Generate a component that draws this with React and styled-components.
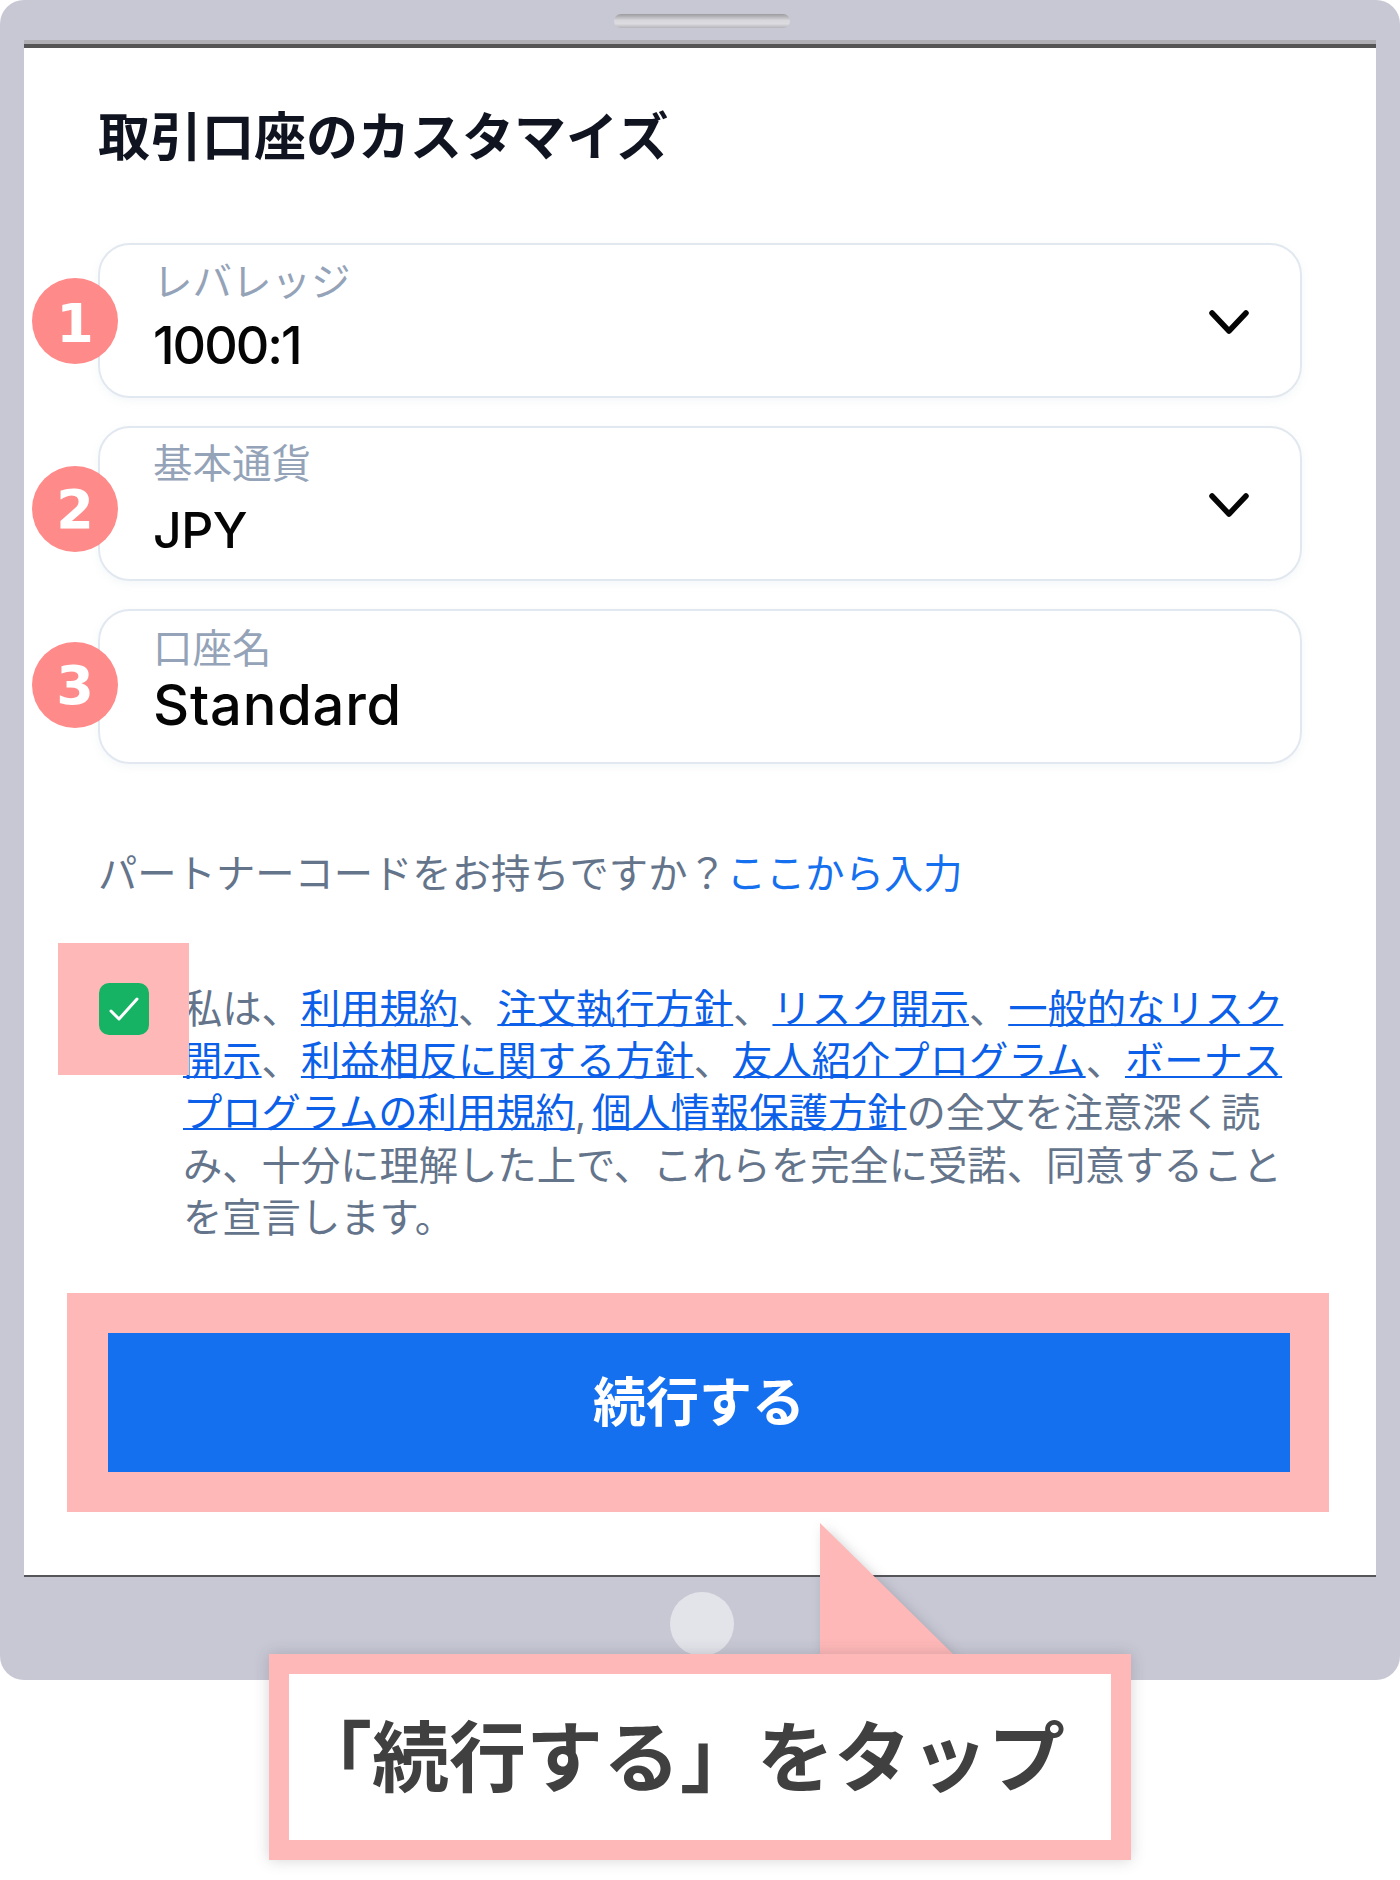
import styled, { createGlobalStyle } from "styled-components";

const GlobalStyle = createGlobalStyle`
  html, body {
    margin: 0;
    padding: 0;
    background: #fff;
  }
  * {
    box-sizing: border-box;
  }
`;

const FONT = `Inter, "Noto Sans CJK JP", sans-serif`;

const Page = styled.div`
  position: relative;
  width: 1400px;
  height: 1880px;
  font-family: ${FONT};
  overflow: hidden;
`;

const Device = styled.div`
  position: relative;
  width: 1400px;
  height: 1680px;
  padding: 40px 24px 0;
  background: #c7c8d4;
  border-radius: 24px;
`;

const Speaker = styled.div`
  position: absolute;
  left: 614px;
  top: 14px;
  width: 176px;
  height: 14px;
  border-radius: 7px;
  background: linear-gradient(to bottom, #9c9ca0, #d8d8dc 45%, #dcdce0 70%, #b4b4ba);
`;

const HomeButton = styled.div`
  position: absolute;
  left: 670px;
  top: 1592px;
  width: 64px;
  height: 64px;
  border-radius: 50%;
  background: #e3e4ea;
`;

const Screen = styled.div`
  background: #fff;
  border-top: 4px solid #b0b0b4;
  border-bottom: 2px solid #55555a;
  padding: 0 74px 63px;
`;

const ScreenEdge = styled.div`
  height: 4px;
  margin: 0 -74px 60px;
  background: #555;
`;

const Title = styled.h1`
  margin: 0 0 75px;
  font-size: 52px;
  line-height: 60px;
  font-weight: 700;
  color: #101420;
`;

const Fields = styled.div`
  display: flex;
  flex-direction: column;
  gap: 28px;
`;

const Field = styled.div`
  position: relative;
  height: 155px;
  display: flex;
  align-items: center;
  justify-content: space-between;
  padding: 2px 51px 0 53px;
  border: 2px solid #e2e8f0;
  border-radius: 32px;
  box-shadow: 0 3px 8px rgba(148, 163, 184, 0.1);
`;

const FieldText = styled.div`
  display: flex;
  flex-direction: column;
  gap: ${(p) => p.$gap}px;
  padding-bottom: ${(p) => p.$lift}px;
`;

const FieldLabel = styled.div`
  font-size: 39.5px;
  line-height: 46px;
  color: #94a3b8;
`;

const FieldValue = styled.div`
  font-size: ${(p) => p.$size}px;
  letter-spacing: ${(p) => p.$spacing}px;
  line-height: 60px;
  font-weight: 500;
  color: #050505;
`;

const StepBadge = styled.div`
  position: absolute;
  left: -68px;
  top: ${(p) => p.$top}px;
  width: 86px;
  height: 86px;
  padding-top: ${(p) => p.$nudge || 0}px;
  display: flex;
  align-items: center;
  justify-content: center;
  border-radius: 50%;
  background: #ff8a8a;
  color: #fff;
  font-family: "DejaVu Sans", sans-serif;
  font-size: 54px;
  font-weight: 700;
`;

const Partner = styled.p`
  margin: 84px 0 83px;
  font-size: 39.3px;
  line-height: 52px;
  color: #64748b;
  white-space: nowrap;
`;

const PartnerLink = styled.span`
  color: #1570ef;
`;

const Agreement = styled.div`
  display: flex;
  align-items: flex-start;
`;

const CheckMark = styled.div`
  position: relative;
  z-index: 1;
  flex: none;
  width: 50px;
  height: 52px;
  margin: 0 34px 0 1px;
  background: #fff;

  &::before {
    content: "";
    position: absolute;
    z-index: -1;
    inset: -40px -40px -40px -41px;
    background: #ffb8b8;
  }
`;

const CheckInner = styled.div`
  width: 100%;
  height: 100%;
  display: flex;
  align-items: center;
  justify-content: center;
  background: #16b364;
  border-radius: 10px;
`;

const AgreeText = styled.p`
  margin: 0;
  width: 1104px;
  font-size: 39.3px;
  line-height: 52.2px;
  word-spacing: -5px;
  color: #64748b;
`;

const DocLink = styled.a`
  color: #0b5fe8;
  text-decoration: underline;
  text-decoration-thickness: 2px;
`;

const ButtonFrame = styled.div`
  margin: 49px -27px 0 -31px;
  padding: 40px 39px 40px 41px;
  background: #ffb8b8;
`;

const ContinueButton = styled.button`
  display: block;
  width: 100%;
  height: 139px;
  padding: 0 0 8px;
  border: 0;
  background: #1570ef;
  color: #fff;
  font-family: ${FONT};
  font-size: 53px;
  font-weight: 700;
`;

const CalloutTail = styled.svg`
  position: absolute;
  left: 810px;
  top: 1515px;
  filter: drop-shadow(4px 4px 6px rgba(60, 60, 70, 0.25));
`;

const Callout = styled.div`
  position: absolute;
  left: 269px;
  top: 1654px;
  width: 862px;
  height: 206px;
  display: flex;
  align-items: center;
  justify-content: center;
  padding: 0 40px 10px 0;
  border: 20px solid #ffb8b8;
  background: #fff;
  box-shadow: 0 0 14px rgba(60, 60, 70, 0.22);
  color: #404040;
  font-size: 77px;
  font-weight: 700;
  white-space: nowrap;
`;

const Chevron = () => (
  <svg width="40" height="26" viewBox="0 0 40 26" fill="none">
    <path d="M3 4 L20 22 L37 4" stroke="#050505" strokeWidth="5.5" strokeLinecap="round" strokeLinejoin="round" />
  </svg>
);

const App = () => {
  return (
    <Page>
      <GlobalStyle />
      <Device>
        <Speaker />
        <Screen>
          <ScreenEdge />
          <Title>取引口座のカスタマイズ</Title>
          <Fields>
            <Field>
              <StepBadge $top={33} $nudge={5}>1</StepBadge>
              <FieldText $gap={11} $lift={8}>
                <FieldLabel>レバレッジ</FieldLabel>
                <FieldValue $size={52} $spacing={-2}>1000:1</FieldValue>
              </FieldText>
              <Chevron />
            </Field>
            <Field>
              <StepBadge $top={38}>2</StepBadge>
              <FieldText $gap={13} $lift={9}>
                <FieldLabel>基本通貨</FieldLabel>
                <FieldValue $size={50} $spacing={-0.5}>JPY</FieldValue>
              </FieldText>
              <Chevron />
            </Field>
            <Field>
              <StepBadge $top={31}>3</StepBadge>
              <FieldText $gap={3} $lift={15}>
                <FieldLabel>口座名</FieldLabel>
                <FieldValue $size={56} $spacing={0.8}>Standard</FieldValue>
              </FieldText>
            </Field>
          </Fields>
          <Partner>
            パートナーコードをお持ちですか？<PartnerLink>ここから入力</PartnerLink>
          </Partner>
          <Agreement>
            <CheckMark>
              <CheckInner>
                <svg width="30" height="26" viewBox="0 0 30 26" fill="none">
                  <path d="M2 15 L10 23 L28 3" stroke="#fff" strokeWidth="3" strokeLinecap="round" strokeLinejoin="round" />
                </svg>
              </CheckInner>
            </CheckMark>
            <AgreeText>
              私は、<DocLink>利用規約</DocLink>、<DocLink>注文執行方針</DocLink>、<DocLink>リスク開示</DocLink>、
              <DocLink>一般的なリスク開示</DocLink>、<DocLink>利益相反に関する方針</DocLink>、
              <DocLink>友人紹介プログラム</DocLink>、<DocLink>ボーナスプログラムの利用規約</DocLink>,{" "}
              <DocLink>個人情報保護方針</DocLink>の全文を注意深く読み、十分に理解した上で、これらを完全に受諾、同意することを宣言します。
            </AgreeText>
          </Agreement>
          <ButtonFrame>
            <ContinueButton>続行する</ContinueButton>
          </ButtonFrame>
        </Screen>
        <HomeButton />
      </Device>
      <CalloutTail width="170" height="150" viewBox="0 0 170 150">
        <path d="M10 8 L143 139 L10 139 Z" fill="#ffb8b8" />
      </CalloutTail>
      <Callout>「続行する」をタップ</Callout>
    </Page>
  );
};

export default App;
